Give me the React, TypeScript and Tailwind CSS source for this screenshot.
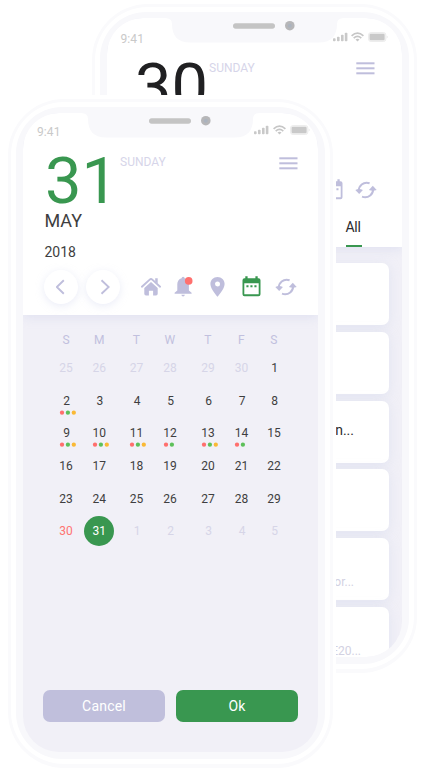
import React from 'react';

function Signal({ className = '' }: { className?: string }) {
  return (
    <svg className={className} width="15" height="10" viewBox="0 0 15 10" fill="#c9c9c9">
      <rect x="0" y="6.2" width="2.6" height="3" rx=".8" />
      <rect x="4" y="4.8" width="2.6" height="4.4" rx=".8" />
      <rect x="8" y="2.8" width="2.6" height="6.4" rx=".8" />
      <rect x="11.8" y="0.8" width="2.6" height="8.4" rx=".8" />
    </svg>
  );
}

function Wifi() {
  return (
    <svg width="13" height="10" viewBox="0 0 13 10" fill="none" stroke="#c6c6c6" strokeWidth="1.7">
      <path d="M.6 3.8Q6.5-1.6 12.4 3.8" />
      <path d="M2.7 6.1Q6.5 2.7 10.3 6.1" />
      <path d="M6.5 9.4 4.5 7.5Q6.5 6 8.5 7.5Z" fill="#c6c6c6" stroke="none" />
    </svg>
  );
}

function Battery() {
  return (
    <svg width="20" height="10" viewBox="0 0 20 10">
      <rect x=".5" y=".5" width="17.4" height="9" rx="2.6" fill="#f3f3f3" stroke="#ededed" />
      <rect x="1.6" y="1.8" width="15" height="6.4" rx="1.2" fill="#c9c9c9" />
      <path d="M18.9 3.5q1.2 1.5 0 3Z" fill="#dedede" />
    </svg>
  );
}

function Menu() {
  return (
    <svg width="19" height="13" viewBox="0 0 19 13" fill="#bfbedc">
      <rect x=".3" y=".3" width="18.2" height="2" />
      <rect x=".3" y="5.3" width="18.2" height="2" />
      <rect x=".3" y="10.3" width="18.2" height="2" />
    </svg>
  );
}

function Refresh() {
  return (
    <svg width="22" height="18" viewBox="0 0 22 18" fill="none" stroke="#bfbedc" strokeWidth="2">
      <path d="M3.9 10.5C3.3 5 8.4.2 14.6 2.3" />
      <path d="M18 7.5C18.7 13 13.4 17.8 7 15.6" />
      <path d="M.3 8.9Q4 7.2 7.9 8.9L4.2 13Z" fill="#bfbedc" stroke="none" />
      <path d="M13.9 9.1Q17.8 10.6 21.7 9.1L17.8 4.8Z" fill="#bfbedc" stroke="none" />
    </svg>
  );
}

function Home() {
  return (
    <svg width="20" height="19" viewBox="0 0 20 19" fill="#bfbedc">
      <path d="M3.3 10.9 10 5l6.7 5.9v5.9q0 1.7-1.7 1.7h-2.9v-4.8H7.9v4.8H5q-1.7 0-1.7-1.7Z" />
      <path d="M.9 9.7 8.7 2.6Q10 1.4 11.3 2.6l7.8 7.1" fill="none" stroke="#bfbedc" strokeWidth="1.9" strokeLinecap="round" />
      <path d="M14.2 1.2h2.5v5.4l-2.5-2.2Z" />
    </svg>
  );
}

function Bell() {
  return (
    <svg width="19" height="21" viewBox="0 0 19 21">
      <path
        d="M7.6 2.2a1.5 1.5 0 0 1 3 0c2.8.8 4.3 3.1 4.3 6v6.3l2.7 2.3v.9H.6v-.9l2.7-2.3V8.2c0-2.9 1.5-5.2 4.3-6Z"
        fill="#bfbedc"
      />
      <path d="M7.3 18.7h3.6q-.4 1.7-1.8 1.7t-1.8-1.7Z" fill="#bfbedc" />
      <circle cx="14.7" cy="4.9" r="3.8" fill="#ff706e" />
    </svg>
  );
}

function Pin() {
  return (
    <svg width="15" height="20" viewBox="0 0 15 20">
      <path
        d="M7.5 0C3.4 0 .4 3.1.4 7c0 5.2 7.1 12.8 7.1 12.8S14.6 12.2 14.6 7c0-3.9-3-7-7.1-7Zm0 4.5a2.5 2.5 0 1 1 0 5 2.5 2.5 0 0 1 0-5Z"
        fill="#bfbedc"
      />
    </svg>
  );
}

function CalendarIcon({ color }: { color: string }) {
  return (
    <svg width="19" height="21" viewBox="0 0 19 21" fill={color}>
      <path
        fillRule="evenodd"
        d="M3.3.2h2.3v2h7.8v-2h2.3v2h.8q2 0 2 2v14q0 2-2 2h-14q-2 0-2-2v-14q0-2 2-2h.8ZM2.3 7.3v11h14.4v-11Z"
      />
      <path d="M4.4 9.3h2.1v1.9H4.4ZM8.4 9.3h2.1v1.9H8.4ZM12.4 9.3h2.1v1.9h-2.1Z" />
    </svg>
  );
}

function Notch() {
  return (
    <svg className="absolute left-[58px] top-0" width="179" height="25" viewBox="0 0 179 25">
      <path d="M0-1V0Q7 0 7 6C7 17 12 24.5 25 24.5H154C167 24.5 172 17 172 6Q172 0 179 0V-1Z" fill="#f8f8fb" />
      <rect x="68" y="5.3" width="42" height="5.4" rx="2.7" fill="#c4c4c4" />
      <circle cx="124.8" cy="7.7" r="4.8" fill="#b6b6b8" />
      <circle cx="124.8" cy="7.7" r="2" fill="#abb3be" />
    </svg>
  );
}

function Phone({ children }: { children: React.ReactNode }) {
  return (
    <div className="h-[669px] w-[325px] rounded-[56px] border-[3px] border-b-4 border-[#fafafc] bg-white p-[5px]">
      <div className="h-[652px] rounded-[46px] border-x-[7px] border-b-[7px] border-t-[6px] border-[#f8f8fb] bg-[#f8f8fb]">
        <div className="relative flex h-[639px] w-[295px] flex-col overflow-hidden rounded-[36px] bg-[#f1f0f7]">{children}</div>
      </div>
    </div>
  );
}

type Tone = 'dark' | 'faded' | 'red' | 'selected';
type Day = { n: number; tone?: Tone; dots?: number };

const weeks: Day[][] = [
  [25, 26, 27, 28, 29, 30].map((n): Day => ({ n, tone: 'faded' })).concat([{ n: 1 }]),
  [{ n: 2, dots: 3 }, { n: 3 }, { n: 4 }, { n: 5 }, { n: 6 }, { n: 7 }, { n: 8 }],
  [{ n: 9, dots: 3 }, { n: 10, dots: 3 }, { n: 11, dots: 3 }, { n: 12, dots: 2 }, { n: 13, dots: 3 }, { n: 14, dots: 2 }, { n: 15 }],
  [16, 17, 18, 19, 20, 21, 22].map((n) => ({ n })),
  [23, 24, 25, 26, 27, 28, 29].map((n) => ({ n })),
  [{ n: 30, tone: 'red' }, { n: 31, tone: 'selected' }, ...[1, 2, 3, 4, 5].map((n): Day => ({ n, tone: 'faded' }))],
];

const tones: Record<Tone, string> = {
  dark: 'text-[#3e3e40]',
  faded: 'text-[#d6d5e7]',
  red: 'text-[#ff7472]',
  selected: 'rounded-full bg-[#399750] text-white',
};
const dotColors = ['#ff6f6d', '#5dc05a', '#fab935'];
const columns = 'grid grid-cols-[33.3px_37.2px_33.5px_38px_33.5px_32.5px_30px]';

function DayCell({ day }: { day: Day }) {
  return (
    <div className="relative h-[32.7px]">
      <div className={`flex h-[30px] w-[30px] items-center justify-center ${day.n < 10 ? 'pl-[1.5px]' : ''} ${tones[day.tone ?? 'dark']}`}>
        {day.n}
      </div>
      {day.dots && (
        <svg className="absolute left-[8px] top-[24px]" width="20" height="6" viewBox="0 0 20 6">
          {dotColors.slice(0, day.dots).map((c, i) => (
            <circle key={c} cx={3 + i * 5.9} cy="2.7" r="2.15" fill={c} />
          ))}
        </svg>
      )}
    </div>
  );
}

function CalendarPhone() {
  return (
    <Phone>
      <header className="relative h-[202px] shrink-0 bg-white shadow-[0_2px_10px_rgba(195,200,232,0.38)]">
        <Notch />
        <div className="flex h-[36px] items-start pl-[14px]">
          <span className="mt-[10px] w-[217px] text-[12px] leading-[18px] tracking-[0.1px] text-[#c9c9c9]">9:41</span>
          <div className="mt-[12px] flex items-center">
            <Signal /><span className="w-[3.5px]" /><Wifi /><span className="w-[4px]" /><Battery />
          </div>
        </div>
        <div className="flex h-[60px] items-start pl-[22px]">
          <span className="mt-px w-[75px] text-[65px] leading-[62px] text-[#399750]">31</span>
          <span className="mt-[4px] w-[159px] text-[12px] leading-[18px] text-[#d6d5e9]">SUNDAY</span>
          <span className="mt-[8px]"><Menu /></span>
        </div>
        <div className="pl-[21.5px]">
          <div className="h-[32px] text-[18px] leading-[24px] text-[#3e3e40]">MAY</div>
          <div className="h-[28px] text-[14px] leading-[22px] text-[#3e3e40]">2018</div>
        </div>
        <div className="flex h-[35px] items-center pl-[21.3px]">
          <button className="flex h-[34px] w-[34px] items-center justify-center rounded-full bg-white shadow-[0_2px_8px_rgba(195,200,232,0.35)]">
            <svg width="10" height="16" viewBox="0 0 10 16" fill="none" stroke="#bfbedc" strokeWidth="1.9"><path d="M7.8 1.2 .8 8l7 6.8" /></svg>
          </button>
          <button className="ml-[8px] flex h-[34px] w-[34px] items-center justify-center rounded-full bg-white shadow-[0_2px_8px_rgba(195,200,232,0.35)]">
            <svg className="ml-[3px]" width="10" height="16" viewBox="0 0 10 16" fill="none" stroke="#bfbedc" strokeWidth="1.9"><path d="m1.5 1.2 7.2 6.8-7.2 6.8" /></svg>
          </button>
          <div className="ml-[20.7px] flex items-center">
            <Home />
            <span className="ml-[13px]"><Bell /></span>
            <span className="ml-[17.5px]"><Pin /></span>
            <span className="ml-[17px]"><CalendarIcon color="#399750" /></span>
            <span className="ml-[14px]"><Refresh /></span>
          </div>
        </div>
      </header>
      <div className="h-[375px] pl-[28px] pt-[16px] text-[12px] leading-[18px] tracking-[0.1px]">
        <div className={`${columns} h-[22px] text-[#c1c0de]`}>
          {['S', 'M', 'T', 'W', 'T', 'F', 'S'].map((d, i) => <div key={i} className="w-[30px] text-center">{d}</div>)}
        </div>
        {weeks.map((week, i) => (
          <div key={i} className={columns}>
            {week.map((day, j) => <DayCell key={j} day={day} />)}
          </div>
        ))}
      </div>
      <div className="flex gap-[11px] pl-[20px] text-[14px] tracking-[0.2px] text-white">
        <button className="h-[32px] w-[122px] rounded-[7px] bg-[#c0bfdc]">Cancel</button>
        <button className="h-[32px] w-[122px] rounded-[7px] bg-[#399750]">Ok</button>
      </div>
    </Phone>
  );
}

const card = 'h-[62px] shrink-0 rounded-[7px] bg-white shadow-[0_2px_12px_rgba(195,205,232,0.34)]';

function AgendaPhone() {
  return (
    <Phone>
      <header className="relative h-[229px] shrink-0 bg-white shadow-[0_2px_10px_rgba(195,200,232,0.38)]">
        <Notch />
        <div className="flex h-[36px] items-start pl-[13.5px]">
          <span className="mt-[12px] w-[212px] text-[12px] leading-[18px] tracking-[0.1px] text-[#c9c9c9]">9:41</span>
          <div className="mt-[14px] flex items-center">
            <Signal /><span className="w-[3px]" /><Wifi /><span className="w-[4px]" /><Battery />
          </div>
        </div>
        <div className="flex h-[125px] items-start pl-[28px]">
          <span className="mt-px w-[74px] text-[65px] leading-[64px] text-[#202022]">30</span>
          <span className="mt-[5px] w-[147px] text-[12px] leading-[18px] text-[#d6d5e9]">SUNDAY</span>
          <span className="mt-[8px]"><Menu /></span>
        </div>
        <div className="flex h-[21px] items-center pl-[216.5px]">
          <CalendarIcon color="#bfbedc" />
          <span className="ml-[12px]"><Refresh /></span>
        </div>
        <div className="ml-[238.5px] flex h-[47px] w-[16px] flex-col border-b-2 border-[#399750] pt-[17px] text-[14px] leading-[20px] tracking-[-0.3px] text-[#2b2b2d]">All</div>
      </header>
      <div className="flex flex-col gap-[6.8px] pl-[20px] pr-[13px] pt-[16px]">
        <div className={card} />
        <div className={card} />
        <div className={`${card} pr-[35px] pt-[19px] text-right text-[14px] leading-[20px] text-[#2b2b2d]`}>n...</div>
        <div className={card} />
        <div className={`${card} pr-[35px] pt-[35px] text-right text-[12px] leading-[18px] text-[#d2d1e2]`}>or...</div>
        <div className={`${card} pr-[28px] pt-[35px] text-right text-[12px] leading-[18px] text-[#d2d1e2]`}>E20...</div>
      </div>
    </Phone>
  );
}

export default function App() {
  return (
    <main className="relative h-[773px] w-[425px] overflow-hidden bg-white font-['Roboto',sans-serif]">
      <div className="absolute left-[92px] top-[4px]"><AgendaPhone /></div>
      <div className="absolute left-[4px] top-[95px] bg-white p-[4px] pr-[3px]"><CalendarPhone /></div>
    </main>
  );
}
